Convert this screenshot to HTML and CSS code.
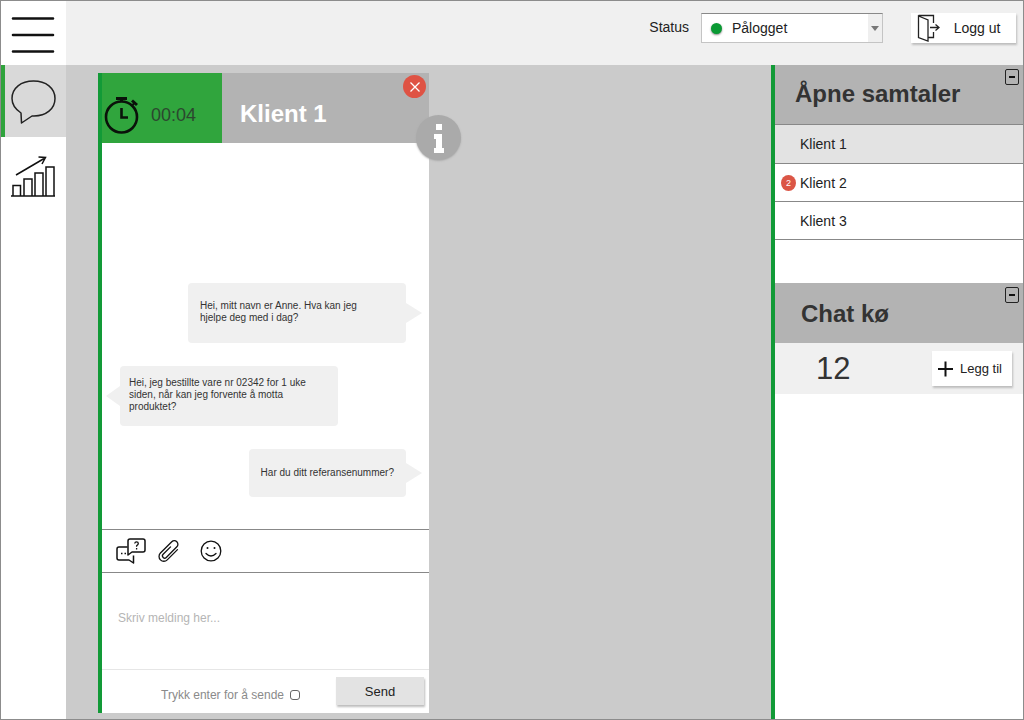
FILE: index.html
```html
<!DOCTYPE html>
<html lang="no">
<head>
<meta charset="utf-8">
<title>Kundechat</title>
<link rel="stylesheet" href="styles.css">
</head>
<body>
<div class="app">
  <nav class="rail">
    <button class="rail-item rail-menu" aria-label="Meny">
      <svg width="44" height="38" viewBox="0 0 44 38" fill="none" stroke="#111" stroke-width="2.6" stroke-linecap="round"><path d="M2 2.500h40M2 19h40M2 35.500h40"/></svg>
    </button>
    <button class="rail-item rail-chat" aria-label="Samtaler">
      <svg width="46" height="46" viewBox="0 0 46 46" fill="none" stroke="#222" stroke-width="1.5" stroke-linejoin="round"><path d="M11 35C5 31 2 27 2 20.500C2 10 11 3 23.500 3S45 10 45 20.500S36 38 24 38H22L11.500 45Z"/></svg>
    </button>
    <button class="rail-item rail-stats" aria-label="Statistikk">
      <svg width="44" height="42" viewBox="0 0 44 42" fill="none" stroke="#111" stroke-width="1.5"><path d="M0 41H44M2 41V30.500H9.500V41M13 41V24H21V41M24 41V18H32V41M35 41V12H43V41M5 20L34 3M27.500 2L34.500 2.500L31 9"/></svg>
    </button>
  </nav>
  <div class="main">
    <header class="topbar">
      <label class="status-label" for="status">Status</label>
      <div class="status-box">
        <span class="status-dot"></span>
        <select class="status-select" id="status"><option>Pålogget</option></select>
        <span class="status-arrow"></span>
      </div>
      <button class="raised logout">
        <svg width="24" height="28" viewBox="0 0 24 28" fill="none" stroke="#222" stroke-width="1.3"><path d="M1.500 2L11 6V27L1.500 23.500ZM1.500 1.500H16.500V9M16.500 18V23.500H11M13 13.500H22M18.500 10.500L22 13.500L18.500 16.500"/></svg>
        <span>Logg ut</span>
      </button>
    </header>
    <div class="work">
      <main class="canvas">
        <section class="chat">
          <header class="chat-head">
            <div class="timer">
              <svg width="36" height="38" viewBox="0 0 36 38" fill="none" stroke="#0a120a"><circle cx="17.500" cy="21" r="15.500" stroke-width="2.600"/><path d="M12 2.500H23M17.500 2V6" stroke-width="3"/><path d="M28 4.500L33 9" stroke-width="3"/><path d="M27.500 10L31 6.500" stroke-width="2"/><path d="M17.500 12V21.500H24" stroke-width="2.600"/></svg>
              <span>00:04</span>
            </div>
            <h1 class="chat-title">Klient 1</h1>
            <button class="close" aria-label="Lukk"><svg width="12" height="12" viewBox="0 0 12 12" stroke="#fff" stroke-width="1.300"><path d="M1.500 1.500L10.500 10.500M10.500 1.500L1.500 10.500"/></svg></button>
            <button class="info" aria-label="Informasjon"><svg width="12" height="30" viewBox="0 0 12 30" fill="#fff"><path d="M3 1H9V7H3ZM1 11H9V25H11V30H1V25H3V16H1Z"/></svg></button>
          </header>
          <div class="messages">
            <p class="bubble out wide">Hei, mitt navn er Anne. Hva kan jeg hjelpe deg med i dag?</p>
            <p class="bubble in wide">Hei, jeg bestillte vare nr 02342 for 1 uke siden, når kan jeg forvente å motta produktet?</p>
            <p class="bubble out">Har du ditt referansenummer?</p>
          </div>
          <div class="tools">
            <button class="tool" aria-label="Hurtigsvar"><svg width="30" height="26" viewBox="0 0 30 26" fill="none" stroke="#111" stroke-width="1.500" stroke-linejoin="round"><path d="M11.500 9H3Q1 9 1 11V20Q1 22 3 22H13L17.500 25V17.500"/><path d="M14 1H27Q29 1 29 3V12Q29 14 27 14H16L12 17V3Q12 1 14 1Z"/><path d="M18.700 5.500Q19 3.800 20.500 3.800Q22.300 3.800 22.300 5.400Q22.300 6.500 20.600 7.700V8.800M20.600 10V11.500" stroke-width="1.300"/><path d="M5 15.500H6.500M8.500 15.500H10"/></svg></button>
            <button class="tool" aria-label="Vedlegg"><svg width="22" height="22" viewBox="-11 -11 22 22" fill="none" stroke="#111" stroke-width="1.300" stroke-linecap="round"><path transform="rotate(45)" d="M5 -7V7.500A4.800 4.800 0 0 1 -4.600 7.500V-8.500A3.600 3.600 0 0 1 2.600 -8.500V6.500A2.200 2.200 0 0 1 -1.800 6.500V-4"/></svg></button>
            <button class="tool" aria-label="Emoji"><svg width="22" height="22" viewBox="0 0 22 22" fill="none" stroke="#111" stroke-width="1.300"><circle cx="11" cy="11" r="9.800"/><path d="M6 13.500Q11 18.500 16 13.500" stroke-linecap="round"/><circle cx="7.500" cy="8" r="1" fill="#111" stroke="none"/><circle cx="14.500" cy="8" r="1" fill="#111" stroke="none"/></svg></button>
          </div>
          <textarea class="compose" aria-label="Melding" placeholder="Skriv melding her..."></textarea>
          <footer class="chat-foot">
            <label class="enter" for="enter">Trykk enter for å sende</label>
            <input class="check" type="checkbox" id="enter">
            <button class="raised send">Send</button>
          </footer>
        </section>
      </main>
      <aside class="side">
        <section class="panel">
          <header class="panel-head"><h2>Åpne samtaler</h2><button class="minus" aria-label="Skjul åpne samtaler"></button></header>
          <ul class="clients">
            <li><button class="client active">Klient 1</button></li>
            <li><button class="client"><span class="badge">2</span>Klient 2</button></li>
            <li><button class="client">Klient 3</button></li>
          </ul>
        </section>
        <section class="panel">
          <header class="panel-head queue-head"><h2>Chat kø</h2><button class="minus" aria-label="Skjul chat kø"></button></header>
          <div class="queue">
            <span class="count">12</span>
            <button class="raised add"><svg width="15" height="16" viewBox="0 0 15 16" stroke="#111" stroke-width="2"><path d="M7.500 0.500V15.500M0 8H15"/></svg><span>Legg til</span></button>
          </div>
        </section>
      </aside>
    </div>
  </div>
</div>
</body>
</html>
```
FILE: styles.css
```css
* { box-sizing: border-box; }
body { margin: 0; font-family: "Liberation Sans", Arial, sans-serif; color: #222; }
button { font: inherit; color: inherit; border: 0; padding: 0; background: none; }
h1, h2, p, ul { margin: 0; padding: 0; }
svg { display: block; flex: none; }

.app { display: flex; min-height: 100vh; border: 1px solid #8c8c8c; background: #cbcbcb; }
.rail { display: flex; flex-direction: column; flex: 0 0 65px; background: #fff; }
.rail-item { display: flex; align-items: center; justify-content: center; height: 72px; padding-right: 2px; }
.rail-menu { height: 64px; padding-top: 4px; }
.rail-chat { padding-right: 5px; background: #d9d9d9; border-left: 4px solid #2fa33c; }
.rail-stats { height: 80px; padding-bottom: 2px; }

.main { display: flex; flex-direction: column; flex: 1; min-width: 0; }
.topbar { display: flex; align-items: flex-start; justify-content: flex-end; height: 64px; padding: 12px 7px 0 0; background: #f0f0f0; }
.status-label { margin-right: 12px; font-size: 14px; line-height: 28px; }
.status-box { display: flex; align-items: center; width: 182px; height: 30px; margin-right: 28px; border: 1px solid #c4c4c4; border-top-color: #888; background: #fff; }
.status-dot { width: 11px; height: 11px; margin: 0 10px 0 9px; border-radius: 50%; background: #0a9a34; box-shadow: 0 1px 2px #888; }
.status-select { flex: 1; min-width: 0; padding: 0; border: 0; appearance: none; background: none; font: 14px "Liberation Sans", Arial, sans-serif; color: #222; }
.status-arrow { display: flex; align-items: center; justify-content: center; align-self: stretch; width: 14px; background: #efefef; }
.status-arrow::before { content: ""; border: 4px solid transparent; border-top: 5px solid #777; border-bottom: 0; }
.raised { display: flex; align-items: center; justify-content: center; background: #fff; box-shadow: 1px 2px 2px #bdbdbd; }
.logout { gap: 13px; width: 105px; height: 30px; padding-right: 10px; font-size: 14px; }

.work { display: flex; flex: 1; }
.canvas { display: flex; flex: 1; padding: 8px 32px 6px; }
.chat { display: flex; flex-direction: column; width: 331px; border-left: 4px solid #129a37; background: #fff; }
.chat-head { position: relative; display: flex; height: 70px; background: #b3b3b3; }
.timer { display: flex; align-items: center; gap: 11px; width: 120px; padding: 14px 0 0 2px; background: #30a53d; color: #2c472f; font-size: 18px; }
.chat-title { padding-left: 18px; color: #fff; font-size: 24px; line-height: 82px; }
.close, .info { position: absolute; display: flex; align-items: center; justify-content: center; border-radius: 50%; }
.close { top: 2px; right: 3px; width: 23px; height: 23px; background: #df5344; }
.info { top: 42px; right: -32px; width: 45px; height: 45px; background: #aaa; box-shadow: 0 1px 2px #aaa; }

.messages { display: flex; flex-direction: column; flex: 1; justify-content: flex-end; align-items: flex-end; gap: 23px; padding: 0 23px 32px 18px; }
.bubble { position: relative; display: flex; align-items: center; min-height: 48px; padding: 0 12px; border-radius: 4px; background: #f0f0f0; font-size: 10px; line-height: 12px; color: #333; }
.wide { width: 218px; min-height: 60px; padding: 0 24px 2px 12px; }
.in { align-self: flex-start; padding: 0 16px 2px 9px; }
.bubble::after { content: ""; position: absolute; top: 50%; margin-top: -10px; border: 10px solid transparent; }
.out::after { left: 100%; border-left: 16px solid #f0f0f0; border-right: 0; }
.in::after { right: 100%; border-right: 14px solid #f0f0f0; border-left: 0; }

.tools { display: flex; align-items: center; height: 44px; gap: 12px; padding-left: 14px; border-top: 1px solid #888; border-bottom: 1px solid #888; }
.tool:last-child { margin-left: 8px; }
.compose { display: block; width: 100%; height: 96px; padding: 38px 16px 0; border: 0; resize: none; background: none; font: 12px "Liberation Sans", Arial, sans-serif; color: #333; }
.compose::placeholder { color: #b5b5b5; opacity: 1; }
.chat-foot { display: flex; align-items: center; justify-content: flex-end; height: 44px; padding: 2px 5px 0 0; border-top: 1px solid #e6e6e6; }
.enter { padding-top: 4px; font-size: 12px; color: #8a8a8a; }
.check { width: 10px; height: 10px; margin: 4px 36px 0 6px; appearance: none; border: 1px solid #666; border-radius: 3px; }
.send { width: 88px; height: 28px; margin-bottom: 3px; background: #e3e3e3; font-size: 13px; }

.side { flex: 0 0 252px; border-left: 4px solid #129a37; background: #fff; }
.panel { min-height: 218px; }
.panel-head { display: flex; align-items: flex-start; justify-content: space-between; height: 59px; padding: 4px 4px 0 20px; background: #b3b3b3; color: #333; }
.panel-head h2 { font-size: 24px; line-height: 50px; }
.queue-head { height: 60px; padding-left: 26px; }
.queue-head h2 { line-height: 54px; }
.minus { display: flex; align-items: center; justify-content: center; width: 14px; height: 16px; border: 1px solid #222; border-radius: 2px; }
.minus::before { content: ""; width: 6px; height: 2px; background: #111; }
.clients { list-style: none; border-top: 1px solid #888; }
.client { position: relative; width: 100%; height: 38px; padding-left: 25px; border-bottom: 1px solid #888; font-size: 14px; text-align: left; }
.active { height: 39px; background: #e3e3e3; }
.badge { position: absolute; left: 6px; top: 11px; width: 15px; border-radius: 50%; background: #db5646; color: #fff; font-size: 9px; line-height: 16px; text-align: center; }
.queue { display: flex; align-items: center; justify-content: space-between; height: 51px; padding: 0 11px 0 41px; background: #f0f0f0; }
.count { font-size: 31px; color: #333; }
.add { gap: 7px; width: 80px; height: 35px; padding-right: 4px; font-size: 13px; }
```
